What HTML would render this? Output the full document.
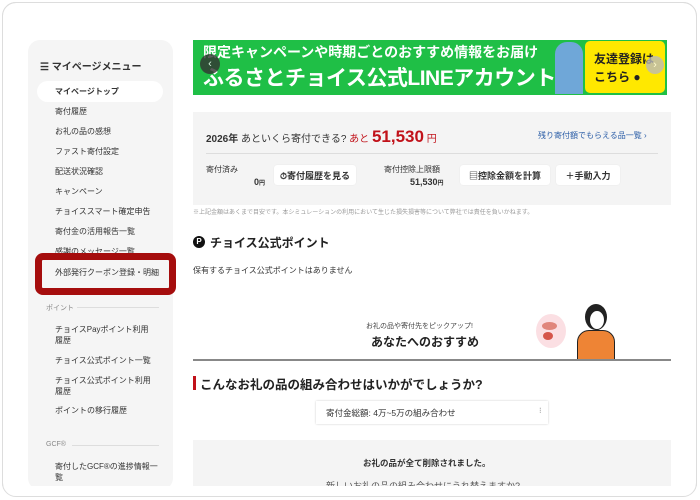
<!DOCTYPE html>
<html><head><meta charset="utf-8"><style>
*{margin:0;padding:0;box-sizing:border-box}
body{width:700px;height:500px;overflow:hidden;background:#fff;font-family:"Liberation Sans","Noto Sans CJK JP",sans-serif;color:#333;position:relative}
.frame{position:absolute;left:2px;top:2px;width:695px;height:495px;border:1px solid #ddd;border-radius:14px;overflow:hidden;background:#fff}
.abs{position:absolute}
.side{left:28px;top:40px;width:145px;height:450px;background:#f5f5f5;border-radius:12px}
.menu{font-size:9px;color:#333;font-weight:bold;white-space:nowrap}
.sec{font-size:7px;color:#888}
.line{height:1px;background:#ddd}
.btn{background:#fff;border-radius:3px;font-size:9px;font-weight:bold;color:#333;display:flex;align-items:center;justify-content:center;box-shadow:0 0 1px #ddd}
</style></head><body>
<div class="frame"></div>
<div class="abs side"></div>
<div class="abs menu" style="left:40px;top:58px;font-size:10px">☰ マイページメニュー</div>
<div class="abs" style="left:37px;top:81px;width:126px;height:21px;background:#fff;border-radius:11px"></div>
<div class="abs menu" style="left:55px;top:86px;font-size:8px">マイページトップ</div>
<div class="abs menu" style="left:55px;top:106px;font-size:8px;font-weight:normal">寄付履歴</div>
<div class="abs menu" style="left:55px;top:126px;font-size:8px;font-weight:normal">お礼の品の感想</div>
<div class="abs menu" style="left:55px;top:146px;font-size:8px;font-weight:normal">ファスト寄付設定</div>
<div class="abs menu" style="left:55px;top:166px;font-size:8px;font-weight:normal">配送状況確認</div>
<div class="abs menu" style="left:55px;top:186px;font-size:8px;font-weight:normal">キャンペーン</div>
<div class="abs menu" style="left:55px;top:206px;font-size:8px;font-weight:normal">チョイススマート確定申告</div>
<div class="abs menu" style="left:55px;top:226px;font-size:8px;font-weight:normal">寄付金の活用報告一覧</div>
<div class="abs menu" style="left:55px;top:246px;font-size:8px;font-weight:normal">感謝のメッセージ一覧</div>
<div class="abs" style="left:35px;top:253px;width:141px;height:42px;border:7px solid #a50d0d;border-radius:8px;background:#f5f5f5"></div>
<div class="abs menu" style="left:55px;top:267px;font-size:8px;font-weight:normal">外部発行クーポン登録・明細</div>
<div class="abs sec" style="left:46px;top:303px">ポイント</div>
<div class="abs line" style="left:77px;top:307px;width:82px"></div>
<div class="abs menu" style="left:55px;top:324px;font-size:8px;font-weight:normal;white-space:normal;width:100px;line-height:11px">チョイスPayポイント利用履歴</div>
<div class="abs menu" style="left:55px;top:355px;font-size:8px;font-weight:normal">チョイス公式ポイント一覧</div>
<div class="abs menu" style="left:55px;top:375px;font-size:8px;font-weight:normal;white-space:normal;width:100px;line-height:11px">チョイス公式ポイント利用履歴</div>
<div class="abs menu" style="left:55px;top:405px;font-size:8px;font-weight:normal">ポイントの移行履歴</div>
<div class="abs sec" style="left:46px;top:441px">GCF®</div>
<div class="abs line" style="left:72px;top:445px;width:87px"></div>
<div class="abs menu" style="left:55px;top:461px;font-size:8px;font-weight:normal;white-space:normal;width:105px;line-height:11px">寄付したGCF®の進捗情報一覧</div>

<div class="abs" style="left:193px;top:40px;width:474px;height:55px;background:#1fbf46"></div>
<div class="abs" style="left:203px;top:42px;color:#fff;font-size:14px;font-weight:bold;white-space:nowrap">限定キャンペーンや時期ごとのおすすめ情報をお届け</div>
<div class="abs" style="left:203px;top:62px;color:#fff;font-size:21px;font-weight:bold;white-space:nowrap;letter-spacing:-0.5px">ふるさとチョイス公式LINEアカウント</div>
<div class="abs" style="left:555px;top:42px;width:28px;height:52px;background:#6fa7d8;border-radius:12px 12px 0 0"></div>
<div class="abs" style="left:585px;top:41px;width:80px;height:52px;background:#ffe800;border-radius:5px"></div>
<div class="abs" style="left:594px;top:50px;font-size:12px;font-weight:bold;color:#222;line-height:18px">友達登録は<br>こちら ●</div>
<div class="abs" style="left:200px;top:54px;width:20px;height:20px;border-radius:50%;background:#333;opacity:.8;color:#fff;font-size:11px;text-align:center;line-height:20px">‹</div>
<div class="abs" style="left:646px;top:56px;width:18px;height:18px;border-radius:50%;background:#bbb;opacity:.8;color:#fff;font-size:11px;text-align:center;line-height:18px">›</div>

<div class="abs" style="left:193px;top:112px;width:478px;height:93px;background:#f4f4f4"></div>
<div class="abs" style="left:206px;top:127px;font-size:10px;white-space:nowrap"><b>2026年</b> あといくら寄付できる? <span style="color:#c1121a">あと <b style="font-size:17px">51,530</b> 円</span></div>
<div class="abs" style="left:538px;top:130px;font-size:8px;color:#2d5fa8">残り寄付額でもらえる品一覧 ›</div>
<div class="abs line" style="left:206px;top:153px;width:452px"></div>
<div class="abs" style="left:206px;top:164px;font-size:8px">寄付済み</div>
<div class="abs" style="left:254px;top:177px;font-size:9px;font-weight:bold">0<span style="font-size:6px">円</span></div>
<div class="abs btn" style="left:274px;top:165px;width:82px;height:20px">⏱寄付履歴を見る</div>
<div class="abs" style="left:384px;top:164px;font-size:8px">寄付控除上限額</div>
<div class="abs" style="left:410px;top:177px;font-size:9px;font-weight:bold">51,530<span style="font-size:6px">円</span></div>
<div class="abs btn" style="left:460px;top:165px;width:90px;height:20px">▤控除金額を計算</div>
<div class="abs btn" style="left:556px;top:165px;width:64px;height:20px">＋手動入力</div>
<div class="abs" style="left:193px;top:207px;font-size:6px;color:#999;white-space:nowrap">※上記金額はあくまで目安です。本シミュレーションの利用において生じた損失損害等について弊社では責任を負いかねます。</div>

<div class="abs" style="left:193px;top:236px;width:12px;height:12px;border-radius:50%;background:#111;color:#fff;font-size:8px;font-weight:bold;text-align:center;line-height:12px">P</div>
<div class="abs" style="left:210px;top:234px;font-size:12px;font-weight:bold;color:#222">チョイス公式ポイント</div>
<div class="abs" style="left:193px;top:265px;font-size:8px">保有するチョイス公式ポイントはありません</div>

<div class="abs" style="left:366px;top:321px;font-size:7px;color:#444">お礼の品や寄付先をピックアップ!</div>
<div class="abs" style="left:371px;top:333px;font-size:12px;font-weight:bold;color:#222">あなたへのおすすめ</div>
<div class="abs" style="left:536px;top:314px;width:30px;height:34px;border-radius:50%;background:#fbdfe3"></div>
<div class="abs" style="left:542px;top:322px;width:15px;height:8px;border-radius:50%;background:#e0867c"></div>
<div class="abs" style="left:543px;top:332px;width:10px;height:8px;border-radius:50%;background:#d5554a"></div>
<div class="abs" style="left:585px;top:304px;width:22px;height:26px;border-radius:50%;background:#222"></div>
<div class="abs" style="left:589px;top:310px;width:16px;height:20px;border-radius:50%;background:#fff;border:1px solid #222"></div>
<div class="abs" style="left:577px;top:330px;width:38px;height:30px;background:#ee8435;border-radius:12px 12px 0 0;border:1px solid #222"></div>
<div class="abs" style="left:193px;top:359px;width:478px;height:2px;background:#888"></div>

<div class="abs" style="left:193px;top:376px;width:3px;height:14px;background:#c1121a"></div>
<div class="abs" style="left:200px;top:374px;font-size:12.5px;font-weight:bold;color:#222;white-space:nowrap">こんなお礼の品の組み合わせはいかがでしょうか?</div>
<div class="abs" style="left:316px;top:401px;width:232px;height:23px;background:#fff;box-shadow:0 0 2px #ccc"></div>
<div class="abs" style="left:326px;top:407px;font-size:8.5px">寄付金総額: 4万~5万の組み合わせ</div>
<div class="abs" style="left:539px;top:406px;font-size:8px;color:#888">⁝</div>
<div class="abs" style="left:193px;top:440px;width:478px;height:46px;background:#f4f4f4"></div>
<div class="abs" style="left:363px;top:457px;font-size:8.5px;font-weight:bold">お礼の品が全て削除されました。</div>
<div class="abs" style="left:326px;top:479px;font-size:9px;color:#555">新しいお礼の品の組み合わせにうれ替えますか?</div>
<div class="abs" style="left:0;top:486px;width:700px;height:14px;background:#fff"></div>
<div class="abs" style="left:2px;top:2px;width:695px;height:495px;border:1px solid #ddd;border-radius:14px"></div>
</body></html>
